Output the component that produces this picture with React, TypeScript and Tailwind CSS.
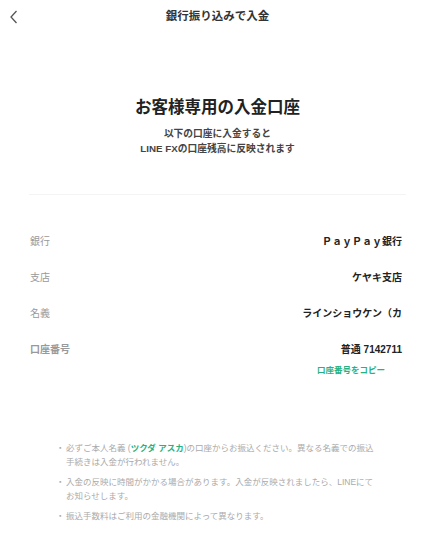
import React from 'react';

const rows = [
  { label: '銀行', value: 'ＰａｙＰａｙ銀行' },
  { label: '支店', value: 'ケヤキ支店' },
  { label: '名義', value: 'ラインショウケン（カ' },
];

const Bullet: React.FC<{ children: React.ReactNode }> = ({ children }) => (
  <li className="flex">
    <span className="w-[10px] shrink-0">・</span>
    <span className="w-[311px]">{children}</span>
  </li>
);

export default function App() {
  return (
    <div
      className="w-[435px] h-[540px] bg-white text-[#333] overflow-hidden"
      style={{ fontFamily: '"Liberation Sans", "Noto Sans CJK JP", sans-serif' }}
    >
      {/* header */}
      <header className="h-[34px] grid grid-cols-[40px_1fr_40px] items-center">
        <button className="flex items-center pl-[9px] text-[#555]">
          <svg width="10" height="14" viewBox="0 0 10 14" fill="none" stroke="currentColor" strokeWidth="1.3">
            <path d="M7.5 1L2 7l5.5 6" />
          </svg>
        </button>
        <h1 className="text-center text-[11.5px] font-bold text-[#333]">銀行振り込みで入金</h1>
        <div />
      </header>

      {/* intro */}
      <section className="pt-[61px] text-center">
        <h2 className="text-[16.5px] leading-[24px] font-bold text-[#222]">お客様専用の入金口座</h2>
        <p className="mt-[7px] text-[9.75px] leading-[15px] font-bold text-[#444]">
          以下の口座に入金すると
          <br />
          LINE FXの口座残高に反映されます
        </p>
      </section>

      <div className="mt-[38px] mx-[29px] h-px bg-[#f4f4f4]" />

      {/* account details */}
      <section className="mt-[40px] pl-[30px] pr-[33px] flex flex-col gap-[22px] text-[10px] leading-[14px]">
        {rows.map((r) => (
          <div key={r.label} className="flex justify-between">
            <span className="text-[#999]">{r.label}</span>
            <span className="font-bold text-[#222]">{r.value}</span>
          </div>
        ))}
        <div>
          <div className="flex justify-between">
            <span className="text-[#999] font-bold">口座番号</span>
            <span className="font-bold text-[#222]">普通 7142711</span>
          </div>
          <div className="mt-[7px] flex justify-end pr-[17px]">
            <button className="text-[8.5px] leading-[12px] font-bold text-[#25b184]">口座番号をコピー</button>
          </div>
        </div>
      </section>

      {/* notes */}
      <ul className="mt-[65px] pl-[56px] flex flex-col gap-[6px] text-[8.5px] leading-[14px] text-[#aaa]">
        <Bullet>
          必ずご本人名義 (<span className="text-[#25b184] font-bold">ツクダ アスカ</span>)の口座からお振込ください。異なる名義での振込手続きは入金が行われません。
        </Bullet>
        <Bullet>入金の反映に時間がかかる場合があります。入金が反映されましたら、LINEにてお知らせします。</Bullet>
        <Bullet>振込手数料はご利用の金融機関によって異なります。</Bullet>
      </ul>
    </div>
  );
}
